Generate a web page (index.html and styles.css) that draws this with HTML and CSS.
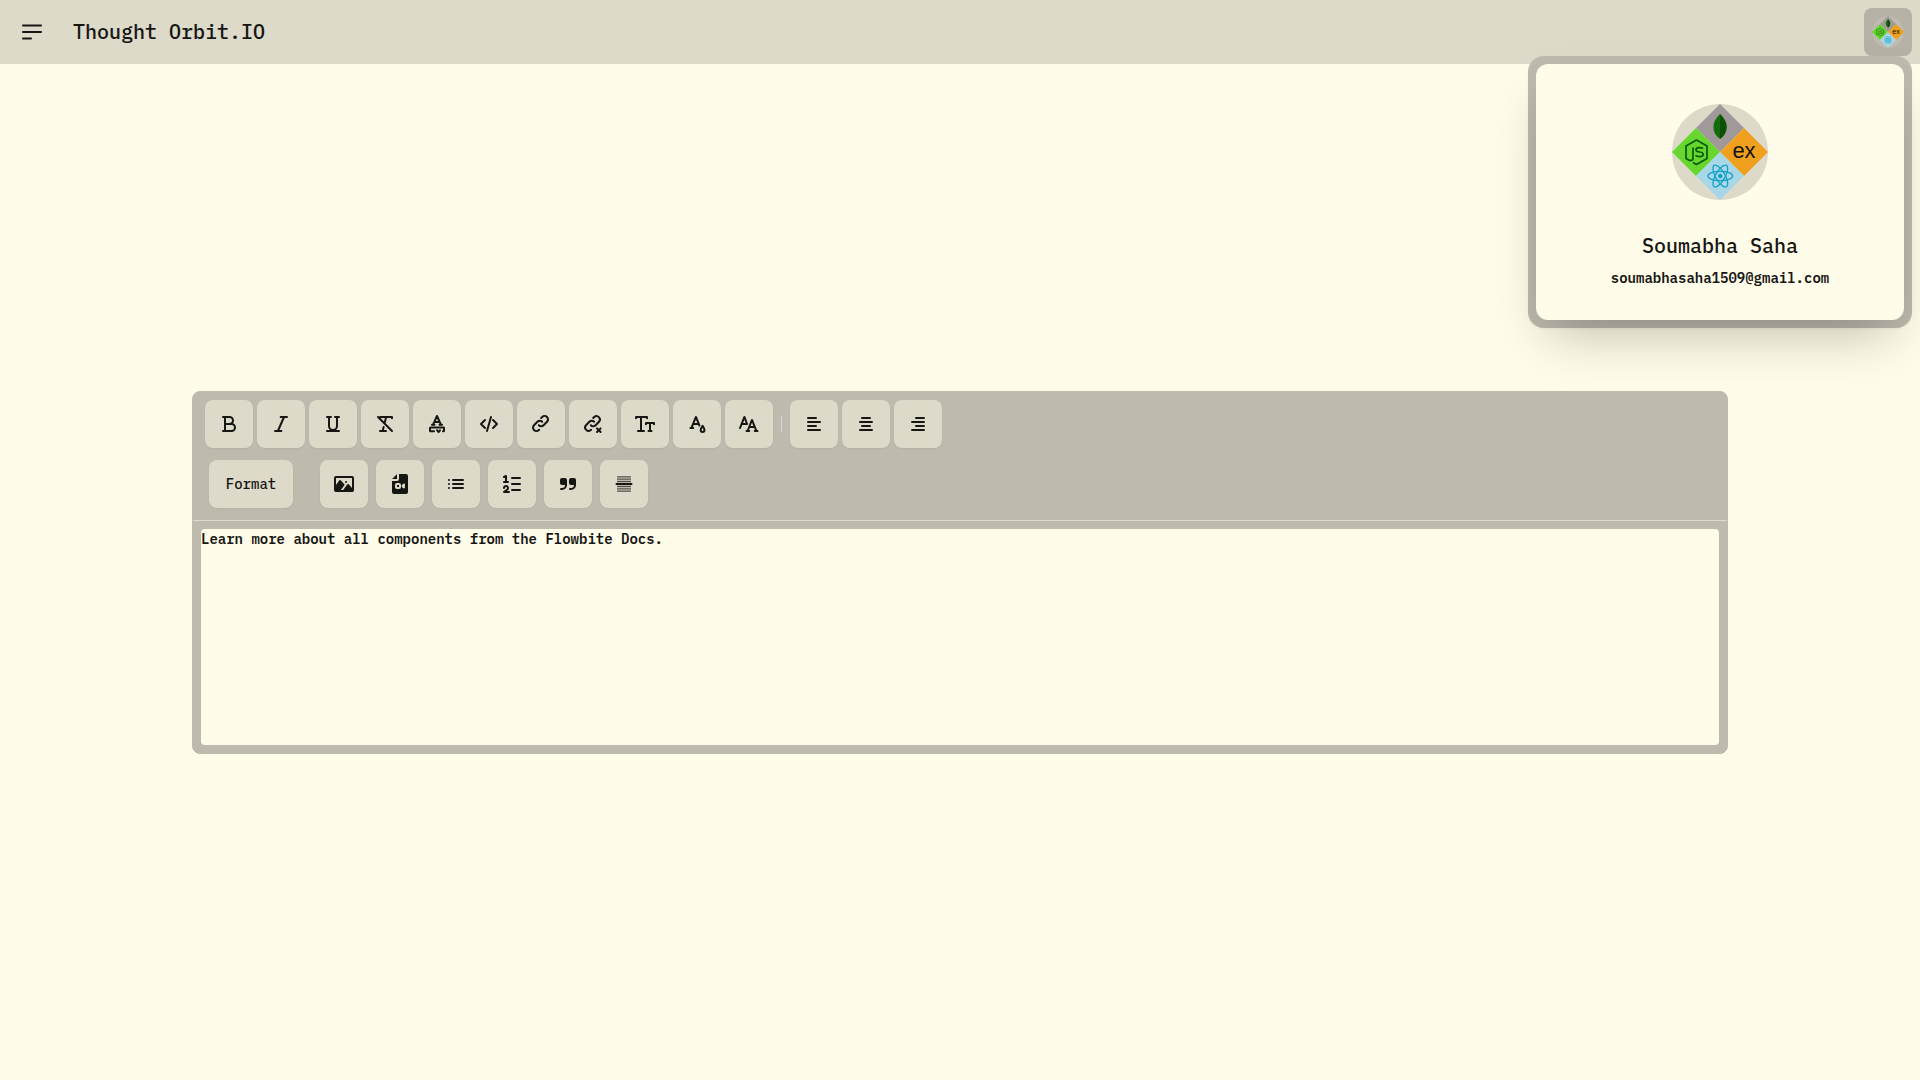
FILE: index.html
```html
<!DOCTYPE html>
<html lang="en">
<head>
<meta charset="utf-8">
<meta name="viewport" content="width=device-width, initial-scale=1">
<title>Thought Orbit.IO</title>
<link rel="stylesheet" href="styles.css">
</head>
<body>
<header class="navbar">
  <button class="menu-button" type="button" aria-label="Open menu">
    <svg class="icon" viewBox="0 0 24 24"><path d="M3 5.500h18M3 12h18M3 18.500h8"/></svg>
  </button>
  <a class="brand" href="#">Thought Orbit.IO</a>
  <div class="profile">
    <button class="avatar-button" type="button" aria-label="Profile" aria-expanded="true">
      <svg class="avatar-small" viewBox="0 0 96 96"><use href="#stack-logo"/></svg>
    </button>
    <div class="profile-menu">
      <section class="profile-card">
        <svg class="avatar-large" viewBox="0 0 96 96" role="img" aria-label="Profile picture">
          <g id="stack-logo">
            <circle class="logo-back" cx="48" cy="48" r="48"/>
            <path d="M48 0l24 24-24 24-24-24z" fill="#a09899"/>
            <path d="M24 24l24 24-24 24L0 48z" fill="#67d72e"/>
            <path d="M72 24l24 24-24 24-24-24z" fill="#eea01e"/>
            <path d="M48 48l24 24-24 24-24-24z" fill="#a8d7e8"/>
            <path d="M48 34v4" stroke="#b5a596" stroke-width="1"/>
            <path d="M48 10c-9 8-8.500 19 0 25 8.500-6 9-17 0-25z" fill="#116b08"/>
            <path d="M48 10c9 8 8.500 19 0 25z" fill="#0b5106"/>
            <g fill="none" stroke="#075c0c" stroke-width="1.700" stroke-linejoin="round">
              <path d="M18.500 57l-4.500-2.600V42l10.500-6L35 42v12.400l-10.500 6-3.500-2"/>
              <path d="M21 43.500v11q0 2.500-3.500 1.500"/>
              <path d="M31 44.500c-1.500-1.200-7-1.500-7 1.200 0 3.600 7.300 1 7.300 4.600 0 3-6 3-7.800 1"/>
            </g>
            <text x="72" y="54" text-anchor="middle" class="logo-text">ex</text>
            <g fill="none" stroke="#129fc6" stroke-width="1.200">
              <ellipse cx="48.300" cy="72" rx="12.300" ry="4.700"/>
              <ellipse cx="48.300" cy="72" rx="12.300" ry="4.700" transform="rotate(60 48.300 72)"/>
              <ellipse cx="48.300" cy="72" rx="12.300" ry="4.700" transform="rotate(120 48.300 72)"/>
            </g>
            <circle cx="48.300" cy="72" r="2.300" fill="#129fc6"/>
          </g>
        </svg>
        <div class="profile-body">
          <h2 class="profile-name">Soumabha Saha</h2>
          <p class="profile-email">soumabhasaha1509@gmail.com</p>
        </div>
      </section>
    </div>
  </div>
</header>

<main class="page">
  <div class="editor">
    <div class="toolbar" role="toolbar" aria-label="Formatting">
      <div class="tool-row">
        <button class="tool" type="button" aria-label="Bold"><svg class="icon" viewBox="0 0 24 24"><path d="M8 5h4.500a3.500 3.500 0 1 1 0 7H8m0-7v7m0-7H6m2 7h6.500a3.500 3.500 0 1 1 0 7H8m0-7v7m0 0H6"/></svg></button>
        <button class="tool" type="button" aria-label="Italic"><svg class="icon" viewBox="0 0 24 24"><path d="m8.874 19 6.143-14M6 19h6.330m-.66-14H18"/></svg></button>
        <button class="tool" type="button" aria-label="Underline"><svg class="icon" viewBox="0 0 24 24"><path d="M6 19h12M8 5v9a4 4 0 0 0 8 0V5M6 5h4m4 0h4"/></svg></button>
        <button class="tool" type="button" aria-label="Strike"><svg class="icon" viewBox="0 0 24 24"><path d="M7 6.200V5h12v1.200M7 19h6m.2-14-1.677 6.523M9.600 19l1.029-4M5 5l6.523 6.523M19 19l-7.477-7.477"/></svg></button>
        <button class="tool" type="button" aria-label="Highlight"><svg class="icon" viewBox="0 0 24 24"><path d="M9 19.200H5.500c-.3 0-.5-.2-.5-.5V16c0-.2.2-.4.5-.4h13c.3 0 .5.2.5.4v2.700c0 .3-.2.5-.5.5H18m-6-1 1.400 1.800h.2l1.400-1.700m-7-5.400L12 4c0-.1 0-.1 0 0l4 8.800m-6-2.700h4m-7 2.700h2.500m5 0H17"/></svg></button>
        <button class="tool" type="button" aria-label="Code"><svg class="icon" viewBox="0 0 24 24"><path d="m8 8-4 4 4 4m8 0 4-4-4-4m-2-3-4 14"/></svg></button>
        <button class="tool" type="button" aria-label="Link"><svg class="icon" viewBox="0 0 24 24"><path d="M13.213 9.787a3.391 3.391 0 0 0-4.795 0l-3.425 3.426a3.390 3.390 0 0 0 4.795 4.794l.321-.304m-.321-4.490a3.390 3.390 0 0 0 4.795 0l3.424-3.426a3.390 3.390 0 0 0-4.794-4.795l-1.028.961"/></svg></button>
        <button class="tool" type="button" aria-label="Remove link"><svg class="icon" viewBox="0 0 24 24"><path d="M13.200 9.800a3.400 3.400 0 0 0-4.800 0L5 13.200A3.400 3.400 0 0 0 9.800 18l.3-.3m-.3-4.500a3.400 3.400 0 0 0 4.800 0L18 9.800A3.400 3.400 0 0 0 13.200 5l-1 1m7.400 14-1.800-1.800m0 0L16 16.400m1.800 1.800 1.800-1.800m-1.800 1.800L16 20"/></svg></button>
        <button class="tool" type="button" aria-label="Text size"><svg class="icon" viewBox="0 0 24 24"><path d="M3 6.200V5h11v1.200M8 5v14m-3 0h6m2-6.800V11h8v1.200M17 11v8m-1.500 0h3"/></svg></button>
        <button class="tool" type="button" aria-label="Text color"><svg class="icon" viewBox="0 0 24 24"><path d="m6.532 15.982 1.573-4m-1.573 4h-1.100m1.100 0h1.650m-.077-4 2.725-6.930a.11.11 0 0 1 .204 0l2.725 6.930m-5.654 0H8.100m.006 0h5.654m0 0 .617 1.569m5.110 4.453c0 1.102-.854 1.996-1.908 1.996-1.053 0-1.907-.894-1.907-1.996 0-1.103 1.907-4.128 1.907-4.128s1.909 3.025 1.909 4.128Z"/></svg></button>
        <button class="tool" type="button" aria-label="Font family"><svg class="icon" viewBox="0 0 24 24"><path d="m10.600 19 4.298-10.930a.11.11 0 0 1 .204 0L19.400 19m-8.800 0H9.500m1.100 0h1.650m7.150 0h-1.650m1.650 0h1.100m-7.700-3.985h4.400M3.021 16l1.567-3.985m0 0L7.320 5.070a.11.11 0 0 1 .205 0l2.503 6.945h-5.440Z"/></svg></button>
        <span class="divider"></span>
        <button class="tool" type="button" aria-label="Align left"><svg class="icon" viewBox="0 0 24 24"><path d="M6 6h8m-8 4h12M6 14h8m-8 4h12"/></svg></button>
        <button class="tool" type="button" aria-label="Align center"><svg class="icon" viewBox="0 0 24 24"><path d="M8 6h8M6 10h12M8 14h8M6 18h12"/></svg></button>
        <button class="tool" type="button" aria-label="Align right"><svg class="icon" viewBox="0 0 24 24"><path d="M18 6h-8m8 4H6m12 4h-8m8 4H6"/></svg></button>
      </div>
      <div class="tool-row tool-row-blocks">
        <button class="tool tool-format" type="button">Format</button>
        <button class="tool" type="button" aria-label="Add image"><svg class="icon icon-solid" viewBox="0 0 24 24"><path d="M13 10a1 1 0 0 1 1-1h.01a1 1 0 1 1 0 2H14a1 1 0 0 1-1-1Z"/><path d="M2 6a2 2 0 0 1 2-2h16a2 2 0 0 1 2 2v12c0 .556-.227 1.060-.593 1.422A.999.999 0 0 1 20.500 20H4a2.002 2.002 0 0 1-2-2V6Zm6.892 12 3.833-5.356-3.990-4.322a1 1 0 0 0-1.549.097L4 12.879V6h16v9.950l-3.257-3.619a1 1 0 0 0-1.557.088L11.200 18H8.892Z"/></svg></button>
        <button class="tool" type="button" aria-label="Add video"><svg class="icon icon-solid" viewBox="0 0 24 24"><path d="M9 7V2.221a2 2 0 0 0-.5.365L4.586 6.500a2 2 0 0 0-.365.5H9Z"/><path d="M11 7V2h7a2 2 0 0 1 2 2v16a2 2 0 0 1-2 2H6a2 2 0 0 1-2-2V9h5a2 2 0 0 0 2-2Zm-2 4a2 2 0 0 0-2 2v2a2 2 0 0 0 2 2h2a2 2 0 0 0 2-2v-2a2 2 0 0 0-2-2H9Zm0 2h2v2H9v-2Zm7.965-.557a1 1 0 0 0-1.692-.72l-1.268 1.218a1 1 0 0 0-.308.721v.733a1 1 0 0 0 .37.776l1.267 1.032a1 1 0 0 0 1.631-.776v-2.984Z"/></svg></button>
        <button class="tool" type="button" aria-label="Bullet list"><svg class="icon" viewBox="0 0 24 24"><path d="M9 8h10M9 12h10M9 16h10M4.990 8H5m-.02 4h.01m0 4H5"/></svg></button>
        <button class="tool" type="button" aria-label="Numbered list"><svg class="icon" viewBox="0 0 24 24"><path d="M12 6h8m-8 6h8m-8 6h8M4 16a2 2 0 1 1 3.321 1.500L4 20h5M4 5l2-1v6m-2 0h4"/></svg></button>
        <button class="tool" type="button" aria-label="Blockquote"><svg class="icon icon-solid" viewBox="0 0 24 24"><path d="M6 6a2 2 0 0 0-2 2v3a2 2 0 0 0 2 2h3a3 3 0 0 1-3 3H5a1 1 0 1 0 0 2h1a5 5 0 0 0 5-5V8a2 2 0 0 0-2-2H6Zm9 0a2 2 0 0 0-2 2v3a2 2 0 0 0 2 2h3a3 3 0 0 1-3 3h-1a1 1 0 1 0 0 2h1a5 5 0 0 0 5-5V8a2 2 0 0 0-2-2h-3Z"/></svg></button>
        <button class="tool" type="button" aria-label="Horizontal rule"><svg class="icon" viewBox="0 0 24 24"><path d="M4.500 12h15"/><path class="rule-lines" d="M5 4.800h14M5 7.200h14M5 9.500h14M5 14.500h14M5 16.800h14M5 19.200h14"/></svg></button>
      </div>
    </div>
    <div class="content">
      <textarea class="document" aria-label="Document">Learn more about all components from the Flowbite Docs.</textarea>
    </div>
  </div>
</main>
</body>
</html>
```
FILE: styles.css
```css
:root {
  --base: #fffce9;
  --base-dark: #dddaca;
  --base-darker: #bebaae;
  --ink: #161613;
}

*,
*::before,
*::after {
  box-sizing: border-box;
}

body {
  display: flex;
  flex-direction: column;
  min-height: 100vh;
  margin: 0;
  background: var(--base);
  color: var(--ink);
  font: 600 14px/20px "IBM Plex Mono", "Liberation Mono", monospace;
}

button {
  padding: 0;
  border: 0;
  color: inherit;
  font: inherit;
  cursor: pointer;
}

.logo-back {
  fill: var(--logo-back, #dddaca);
}

.logo-text {
  fill: #15110a;
  font: 400 22px "Liberation Sans", sans-serif;
}

.icon {
  display: block;
  width: 24px;
  height: 24px;
  fill: none;
  stroke: currentColor;
  stroke-width: 2;
  stroke-linecap: round;
  stroke-linejoin: round;
}

.icon-solid {
  fill: currentColor;
  fill-rule: evenodd;
  stroke: none;
}

.rule-lines {
  stroke-width: 1.3;
  stroke-linecap: butt;
  opacity: 0.7;
}

/* Navbar */

.navbar {
  display: flex;
  align-items: center;
  height: 64px;
  padding: 0 8px;
  background: var(--base-dark);
}

.menu-button {
  display: grid;
  place-items: center;
  width: 48px;
  height: 48px;
  background: none;
}

.brand {
  padding: 0 16px;
  border: 1px solid transparent;
  color: inherit;
  font-size: 20px;
  font-weight: 500;
  line-height: 28px;
  text-decoration: none;
}

.profile {
  position: relative;
  margin-left: auto;
}

.avatar-button {
  display: grid;
  place-items: center;
  width: 48px;
  height: 48px;
  border-radius: 8px;
  background: #b5b1a5;
}

.avatar-small {
  --logo-back: #bebaae;
  width: 32px;
  height: 32px;
}

.profile-menu {
  position: absolute;
  top: 100%;
  right: 0;
  z-index: 1;
  width: 384px;
  padding: 8px;
  border-radius: 16px;
  background: var(--base-darker);
  box-shadow: 0 1px 2px rgba(0, 0, 0, 0.05);
}

.profile-card {
  display: flex;
  flex-direction: column;
  align-items: center;
  padding-top: 40px;
  border-radius: 12px;
  background: var(--base);
  box-shadow: 0 25px 50px -12px rgba(0, 0, 0, 0.25);
}

.avatar-large {
  width: 96px;
  height: 96px;
}

.profile-body {
  display: flex;
  flex-direction: column;
  gap: 8px;
  padding: 32px;
  text-align: center;
}

.profile-name {
  margin: 0;
  font-size: 20px;
  font-weight: 500;
  line-height: 28px;
}

.profile-email {
  margin: 0;
}

/* Editor */

.page {
  display: flex;
  flex: 1;
  align-items: center;
  justify-content: center;
}

.editor {
  width: 80%;
  border: 1px solid var(--base-darker);
  border-radius: 8px;
  background: var(--base-darker);
}

.toolbar {
  display: flex;
  flex-direction: column;
  gap: 12px;
  padding: 8px 12px 12px;
  border-bottom: 1px solid var(--base-dark);
}

.tool-row {
  display: flex;
  flex-wrap: wrap;
  align-items: center;
  gap: 4px;
}

.tool-row-blocks {
  gap: 8px;
  padding-left: 4px;
}

.tool {
  display: grid;
  place-items: center;
  width: 48px;
  height: 48px;
  border-radius: 8px;
  background: var(--base-dark);
  box-shadow: 0 1px 2px rgba(0, 0, 0, 0.05);
}

.tool-format {
  width: 84px;
  margin-right: 19px;
  font-weight: 500;
}

.divider {
  width: 1px;
  height: 16px;
  margin: 0 4px;
  background: #d1d5db;
}

.content {
  padding: 8px;
}

.document {
  display: block;
  width: 100%;
  height: 216px;
  padding: 0;
  border: 0;
  border-radius: 4px;
  outline: 0;
  background: var(--base);
  color: inherit;
  font: inherit;
  resize: none;
}
```
